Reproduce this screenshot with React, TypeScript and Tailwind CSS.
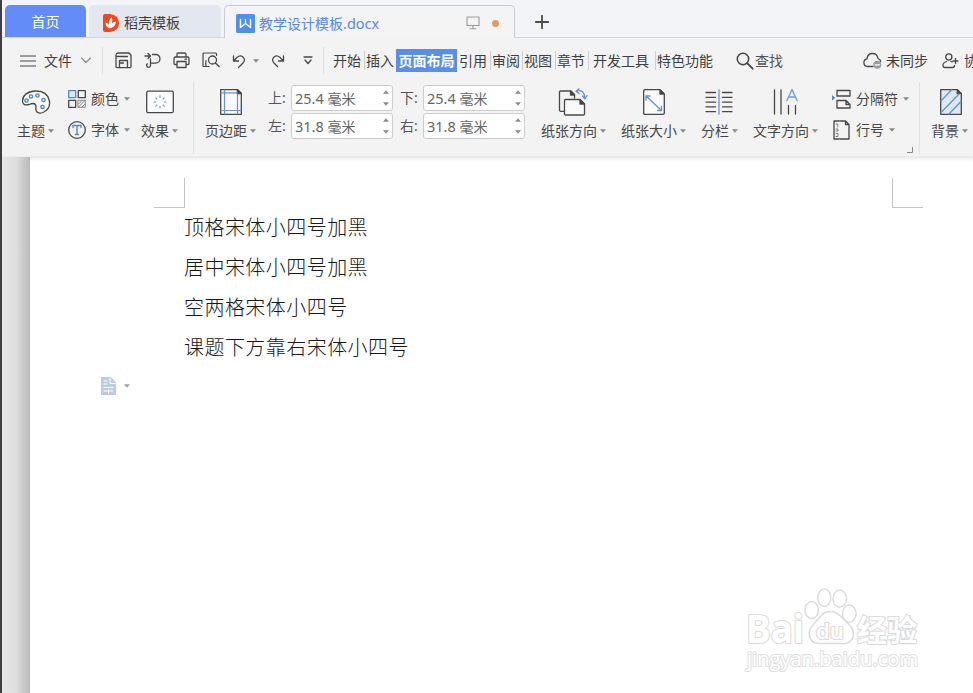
import type { ReactNode } from "react";

const documentLines = [
  "顶格宋体小四号加黑",
  "居中宋体小四号加黑",
  "空两格宋体小四号",
  "课题下方靠右宋体小四号",
];

function Caret({ className = "" }: { className?: string }) {
  return (
    <svg width="6" height="4" viewBox="0 0 6 4" className={`shrink-0 ${className}`}>
      <path d="M0 .3h6L3 3.7z" fill="#8a8a8a" />
    </svg>
  );
}

function Icon({ w, h, children, className = "" }: { w: number; h: number; children: ReactNode; className?: string }) {
  return (
    <svg
      width={w}
      height={h}
      viewBox={`0 0 ${w} ${h}`}
      fill="none"
      stroke="#484848"
      strokeWidth="1.3"
      strokeLinecap="round"
      strokeLinejoin="round"
      className={`block shrink-0 ${className}`}
    >
      {children}
    </svg>
  );
}

function Tabs() {
  return (
    <div className="flex h-[38px] shrink-0 items-end bg-[#f2f4f8] shadow-[inset_0_-1px_0_#d3d6da]">
      <div className="mb-px ml-[3px] flex h-8 w-[81px] items-center justify-center rounded-t-[5px] bg-[#648cf8] pt-0.5 text-white">
        首页
      </div>
      <div className="mb-px ml-[3px] flex h-8 w-[132px] items-center rounded-t-[5px] bg-[#e3e7ef] pt-1 pl-[14px]">
        <Icon w={16} h={18}>
          <path d="M0 2Q0 0 2 0h5q9 1 9 9t-9 9H2q-2 0-2-2z" fill="#ee4a22" stroke="none" />
          <path d="M7 14.500Q2.500 13 2.500 8.500q2.200.3 3.300 2.500Q5.500 6 8.500 3q1.500 3 .5 6.500 1.500-2 4-2Q12.500 13 7 14.500z" fill="#fff" stroke="none" />
        </Icon>
        <span className="ml-[5px]">稻壳模板</span>
      </div>
      <div className="ml-[3px] flex h-[33px] w-[291px] items-center rounded-t-[5px] border border-b-0 border-[#c5cad4] bg-[#f4f4f4] pt-0.5 pl-[11px]">
        <Icon w={19} h={19}>
          <rect width="19" height="19" rx="1.500" fill="#4f90ee" stroke="none" />
          <path d="M4.500 5.500v8l5-4 5 4v-8M9.500 5.500v4" stroke="#fff" strokeWidth="1.400" />
        </Icon>
        <span className="ml-[4px] w-[122px] whitespace-nowrap text-[#5688e8]">
          教学设计模板<span className="text-[14.500px]">.docx</span>
        </span>
        <Icon w={14} h={14} className="ml-[85px]">
          <path d="M1 1h12v8.500H1zM7 9.500v3M4 12.800h6" stroke="#999" strokeWidth="1.100" />
        </Icon>
        <span className="ml-[12px] size-[7px] rounded-full bg-[#e69a5b]" />
      </div>
      <Icon w={14} h={14} className="mb-[9px] ml-[20px]">
        <path d="M7 .8v12.400M.8 7h12.400" stroke="#4b4b4b" strokeWidth="1.800" />
      </Icon>
    </div>
  );
}

function Split() {
  return <span className="h-[19px] w-px bg-[#cfcfcf]" />;
}

function MenuBar() {
  return (
    <div className="flex h-[44px] shrink-0 items-center pt-px whitespace-nowrap *:shrink-0">
      <Icon w={16} h={14} className="ml-[18px]">
        <path d="M.5 2h15M.5 7h15M.5 12h15" strokeWidth="1.200" />
      </Icon>
      <span className="ml-[8px] w-[29px]">文件</span>
      <Icon w={10} h={7} className="ml-[8px]">
        <path d="M.5 1 5 5.500 9.500 1" stroke="#8b8b8b" strokeWidth="1.100" />
      </Icon>
      <span className="ml-[11px] h-[27px] w-px bg-[#dedede]" />

      <Icon w={17} h={17} className="ml-[12px]">
        <path d="M3.500 1H14l2 2v11.500q0 1.200-1.200 1.200H2.200Q1 15.700 1 14.500V3.500Q1 1 3.500 1zM1.500 4.500h11M4.500 15.500V8.500h8v7M4.500 11h4" />
      </Icon>
      <Icon w={17} h={17} className="ml-[12px]">
        <path d="M1 4h5M4 1.500 6.500 4 4 6.500M8.500 2.500h3.200a4.300 4.300 0 0 1 0 8.600H6.500V7M6.500 11.100v2.400q0 1.800-1.800 1.800t-2-1.700.7-1.700" />
      </Icon>
      <Icon w={17} h={17} className="ml-[12px]">
        <path d="M4 5V2.200Q4 1 5.200 1h6.600Q13 1 13 2.200V5M4 12.500H2.200Q1 12.500 1 11.300V6.500Q1 5 2.500 5h12Q16 5 16 6.500v4.800q0 1.200-1.200 1.200H13M4 9.500h9v6H4zM12 7.200h1.500" />
      </Icon>
      <Icon w={18} h={17} className="ml-[12px]">
        <path d="M7 14.500H2Q1 14.500 1 13.500V2q0-1 1-1h11.500q1 0 1 1v1.500M4 14.500q-.5-3 0-6" strokeWidth="1.200" />
        <circle cx="10.500" cy="8" r="4" />
        <path d="m13.400 11 3.800 3.500" />
      </Icon>
      <Icon w={14} h={16} className="ml-[12px]">
        <path d="M1.500 3v5h5M2 7.500 5.200 4.300Q8 1.700 10.700 3.700 14 6.500 11 10L6.500 14.500" />
      </Icon>
      <Caret className="ml-[7px]" />
      <Icon w={14} h={16} className="ml-[12px]">
        <path d="M12.500 3v5h-5M12 7.500 8.800 4.300Q6 1.700 3.300 3.700 0 6.500 3 10l3.500 3.500" />
      </Icon>
      <Icon w={10} h={9} className="ml-[18px]">
        <path d="M1 1h8M2 4l3 3.500L8 4" />
      </Icon>
      <span className="ml-[10px] h-[27px] w-px bg-[#dedede]" />

      <span className="ml-[9px] w-[31px]">开始</span>
      <Split />
      <span className="ml-px w-[30px]">插入</span>
      <span className="flex h-[23px] w-[61px] items-center justify-center bg-[#5c8ee8] font-bold text-white">页面布局</span>
      <span className="ml-[2px] w-[31px]">引用</span>
      <Split />
      <span className="ml-px w-[30px]">审阅</span>
      <Split />
      <span className="ml-px w-[31px]">视图</span>
      <Split />
      <span className="ml-px w-[31px]">章节</span>
      <Split />
      <span className="ml-[4px] w-[62px]">开发工具</span>
      <Split />
      <span className="ml-px w-[57px]">特色功能</span>
      <Icon w={18} h={18} className="ml-[22px]">
        <circle cx="7" cy="7" r="5.700" strokeWidth="1.600" />
        <path d="m11.200 11.200 5.500 5.500" strokeWidth="1.900" />
      </Icon>
      <span className="ml-px w-[29px] text-[#555]">查找</span>
      <Icon w={19} h={17} className="ml-[79px]">
        <path d="M10 14.500H4.500A3.900 3.900 0 0 1 4 6.800Q4.500 1.500 9.500 1.500q4.800 0 5.500 5 2.500.8 2.700 3" />
        <circle cx="14.300" cy="12.800" r="4" fill="#999ca3" stroke="none" />
        <path d="M12.200 12.800h4.200" stroke="#fff" />
      </Icon>
      <span className="ml-[4px] w-[43px]">未同步</span>
      <Icon w={17} h={16} className="ml-[13px]">
        <circle cx="6.800" cy="4" r="3.100" />
        <path d="M4.500 8.500Q1 9.500 1 12.500q0 2 2 2h7.500q2 0 2-2M9 8.500l1 .4M13.500 5.500v5M11 8h5" />
      </Icon>
      <span className="ml-[5px]">协作</span>
    </div>
  );
}

function BigButton({ label, icon, className = "" }: { label: string; icon: ReactNode; className?: string }) {
  return (
    <div className={`flex shrink-0 flex-col pt-[5px] ${className}`}>
      <div className="flex h-[30px] items-center justify-center pr-[3px]">{icon}</div>
      <div className="mt-[4px] flex h-5 items-center whitespace-nowrap">
        {label}
        <Caret className="ml-[3px]" />
      </div>
    </div>
  );
}

function SmallButton({ label, icon }: { label: string; icon: ReactNode }) {
  return (
    <div className="flex h-[20px] items-center whitespace-nowrap">
      {icon}
      <span className="ml-[5px]">{label}</span>
      <Caret className="ml-[5px]" />
    </div>
  );
}

function MarginField({ label, value }: { label: string; value: string }) {
  return (
    <div className="flex h-[26px] items-center">
      <span className="w-[23px] text-[#555]">{label}:</span>
      <div className="flex h-[26px] w-[102px] items-center rounded-[3px] border border-[#cdcdcd] bg-white pl-[3px] text-[#666]">
        <span className="w-[88px] whitespace-nowrap">
          <span className="text-[14.500px]">{value}</span> 毫米
        </span>
        <div className="flex flex-col gap-[8px]">
          <Caret className="rotate-180" />
          <Caret />
        </div>
      </div>
    </div>
  );
}

function Ribbon() {
  return (
    <div className="flex h-[75px] shrink-0 border-b border-[#ececec] text-[#484848]">
      <BigButton
        label="主题"
        className="ml-[15px] w-[41px]"
        icon={
          <Icon w={30} h={26}>
            <path d="M8 15.500Q1.500 17 1.500 12 2 3 14 2q12-.5 14.300 9.500Q30 20 22 23.500q-4.500 1.500-6.500-1-1-2-.5-4 .2-4-3-4-1.500 0-4 1z" fill="#fafafa" />
            <g stroke="#5586c5" fill="#dce9fb">
              <circle cx="5.500" cy="11.500" r="1.700" />
              <circle cx="10" cy="7.500" r="1.700" />
              <circle cx="16.500" cy="6.500" r="1.700" />
              <circle cx="22.500" cy="11" r="1.700" />
              <circle cx="21.500" cy="18" r="1.700" />
            </g>
          </Icon>
        }
      />
      <div className="ml-[10px] flex w-[73px] shrink-0 flex-col gap-[11px] pt-[7px]">
        <SmallButton
          label="颜色"
          icon={
            <Icon w={18} h={18}>
              <rect x=".7" y=".7" width="7" height="7" stroke="#5586c5" fill="#dce9fb" />
              <rect x="10.300" y=".7" width="7" height="7" />
              <rect x=".7" y="10.300" width="7" height="7" />
              <path d="M10.300 10.300h7v7h-7zM10.500 14l3.500-3.500M10.500 17l6.500-6.500M14 17l3-3" stroke="#888" strokeWidth="1" />
            </Icon>
          }
        />
        <SmallButton
          label="字体"
          icon={
            <Icon w={18} h={18}>
              <circle cx="9" cy="9" r="8.300" />
              <path d="M5 6.500V4.500h8v2M9 4.500v9M7.500 13.500h3" stroke="#5586c5" strokeWidth="1.400" />
            </Icon>
          }
        />
      </div>
      <BigButton
        label="效果"
        className="w-[41px]"
        icon={
          <Icon w={28} h={24}>
            <rect x=".7" y="1.200" width="26.600" height="21.500" rx="1.500" fill="#fafafa" />
            <path
              d="M14 5.800v1.500M14 16.500v1.500M8 12h1.500M18.500 12H20M9.800 7.800l1 1M18.200 7.800l-1 1M9.800 16.200l1-1M18.200 16.200l-1-1"
              stroke="#6793ce"
              strokeWidth="1.200"
            />
          </Icon>
        }
      />
      <span className="ml-[11px] h-[72px] w-px shrink-0 bg-[#e2e2e2]" />

      <BigButton
        label="页边距"
        className="ml-[11px] w-[55px]"
        icon={
          <Icon w={22} h={26}>
            <path d="M.7.700h17l3.600 3.600v21H.7z" fill="#fafafa" />
            <path d="M17.300.7v4h4z" fill="#444" />
            <path d="M4.500 1v24M17.500 5v20M1 3.800h16M1 21.500h20" stroke="#6793ce" strokeWidth="1.200" />
          </Icon>
        }
      />
      <div className="ml-[8px] grid shrink-0 grid-cols-[125px_125px] content-start gap-x-[7px] gap-y-[2px] pt-[3px]">
        <MarginField label="上" value="25.4" />
        <MarginField label="下" value="25.4" />
        <MarginField label="左" value="31.8" />
        <MarginField label="右" value="31.8" />
      </div>
      <BigButton
        label="纸张方向"
        className="ml-[16px] w-[66px]"
        icon={
          <Icon w={30} h={28}>
            <path d="M7 23.300H2.500Q1.500 23 1.500 22V4Q1.500 3 2.500 3H13l3.500 3.500V10" />
            <path d="M7.500 11.500H22l4.500 4.500v10q0 1-1 1h-18q-1 0-1-1V12.500q0-1 1-1z" fill="#fafafa" />
            <path d="M22 11.500v4.500h4.500zM12.500 3v4h4z" fill="#444" />
            <path d="M19 3q7-2 8 7M21 .8 18 3.200l3 2.400M24.500 8l2.500 3 2-3.500" stroke="#6793ce" />
          </Icon>
        }
      />
      <BigButton
        label="纸张大小"
        className="ml-[14px] w-[66px]"
        icon={
          <Icon w={22} h={26} className="ml-[2px]">
            <path d="M2 .7h15l4.300 4.300v19q0 1.300-1.300 1.300H2Q.7 25.300.7 24V2Q.7.700 2 .7z" fill="#fafafa" />
            <path d="M17 1v4h4z" fill="#444" />
            <path d="m3 7 15.500 14.500M3 11V7h4M14.500 21.500h4v-4" stroke="#6793ce" />
          </Icon>
        }
      />
      <BigButton
        label="分栏"
        className="ml-[14px] w-[38px]"
        icon={
          <Icon w={28} h={26}>
            <path d="M1 3.500h9.500M1 8.300h9.500M1 13.100h9.500M1 17.900h9.500M1 22.700h9.500M17.500 3.500H27M17.500 8.300H27M17.500 13.100H27M17.500 17.900H27M17.500 22.700H27" />
            <path d="M14 1v24" stroke="#6793ce" />
          </Icon>
        }
      />
      <BigButton
        label="文字方向"
        className="ml-[14px] w-[66px]"
        icon={
          <Icon w={26} h={26} className="ml-[3px]">
            <path d="M1.500 1v24M8 1v24M15.500 16.500V25M22.500 16.500V25" />
            <path d="m14 11.500 5-11 5 11M15.500 8h7" stroke="#6f9fdf" strokeWidth="1.400" />
          </Icon>
        }
      />
      <div className="ml-[13px] flex w-[76px] shrink-0 flex-col gap-[11px] pt-[7px]">
        <SmallButton
          label="分隔符"
          icon={
            <Icon w={19} h={20}>
              <path d="M5 1.500h13v5.500H5zM5 11.500h9l4 4V19H5zM14 11.500v4h4" />
              <path d="M0 6v5.500L3.300 8.700z" fill="#5586c5" stroke="none" />
            </Icon>
          }
        />
        <SmallButton
          label="行号"
          icon={
            <Icon w={19} h={20}>
              <path d="M8 1h5.500L17 4.500V19H8M13.500 1v3.500H17M7 1H2v18h5" />
              <path d="M4 4h1.800v3M4 9h2v2H4M4 13.500h2v3H4" stroke="#777" strokeWidth=".9" />
            </Icon>
          }
        />
      </div>
      <Icon w={6} h={6} className="mt-[65px] -ml-px">
        <path d="M5.500 0v5.500H0" stroke="#888" strokeWidth="1" strokeLinecap="square" />
      </Icon>
      <span className="ml-[6px] h-[72px] w-px shrink-0 bg-[#e2e2e2]" />
      <BigButton
        label="背景"
        className="ml-[11px] w-[42px]"
        icon={
          <Icon w={22} h={26}>
            <path d="M.7.700h16.600l4 4v20.600H.7z" fill="#dce9fb" />
            <path d="M17.300.7v4h4z" fill="#444" />
            <path d="M1 12 11.500 1M1 23.500 19 5M9 25 21 12.500" stroke="#6793ce" />
          </Icon>
        }
      />
    </div>
  );
}

function Watermark() {
  return (
    <svg
      width="184"
      height="96"
      viewBox="0 -4 184 96"
      className="absolute right-[46px] bottom-[11px]"
      fill="#fff"
      stroke="#dcdcdc"
      strokeWidth="1.500"
      strokeLinejoin="round"
      fontFamily="'Open Sans', 'Noto Sans CJK SC', sans-serif"
    >
      <ellipse cx="68.700" cy="20" rx="6.700" ry="8.600" />
      <ellipse cx="81.300" cy="7.700" rx="6.500" ry="8.800" />
      <ellipse cx="96.700" cy="8.700" rx="6.800" ry="8.600" />
      <ellipse cx="106.300" cy="23.700" rx="6.800" ry="8.600" />
      <path d="M87 21.500q-6 0-9.500 5l-8.500 9.500q-5 6-1.500 13 3 5 10 4.500h20q9 1 12-5 2.500-7-2-12.500L98 26.500q-5-5-11-5z" />
      <g style={{ paintOrder: "stroke" }} strokeWidth="2.200">
        <text x="3" y="53" fontSize="39" fontWeight="700" textLength="58" lengthAdjust="spacingAndGlyphs">Bai</text>
        <text x="73" y="49" fontSize="21" fontWeight="600" textLength="28" lengthAdjust="spacingAndGlyphs">du</text>
        <text x="114" y="51" fontSize="30" fontWeight="700" fontFamily="'Noto Sans CJK SC', sans-serif">经验</text>
        <text x="4" y="76" fontSize="20" fontWeight="400" stroke="#e2e2e2" textLength="171" lengthAdjust="spacingAndGlyphs">
          jingyan.baidu.com
        </text>
      </g>
    </svg>
  );
}

function Page() {
  return (
    <div className="relative flex min-h-0 flex-1">
      <div className="w-[28px] shrink-0 bg-linear-to-r from-[#e6e6e6] via-[#dedede] to-[#bababa]" />
      <div className="flex-1 bg-white shadow-[inset_0_4px_4px_-3px_#dddddd]">
        <div className="flex justify-between pt-[21px] pr-[50px] pl-[124px]">
          <span className="h-[30px] w-[31px] border-r border-b border-[#c4c4c4]" />
          <span className="h-[30px] w-[31px] border-b border-l border-[#c4c4c4]" />
        </div>
        <div className="pl-[154px] text-[20px] leading-[40px] font-light tracking-[0.45px] text-[#181818]">
          {documentLines.map((line) => (
            <p key={line}>{line}</p>
          ))}
        </div>
        <div className="mt-[9px] flex items-center pl-[71px]">
          <Icon w={15} h={18}>
            <path d="M0 0h10l5 5.500V18H0z" fill="#bdcce3" stroke="none" />
            <path d="M9 1v5.500h5M3 4h3M3 7h3M3 10.500h9M3 14h9M7.500 13v3" stroke="#fff" strokeWidth="1" />
          </Icon>
          <Caret className="ml-[8px] opacity-80" />
        </div>
      </div>
      <Watermark />
    </div>
  );
}

export default function App() {
  return (
    <div className="flex h-[693px] w-[973px] overflow-hidden bg-[#3f3f43] pl-[2px] font-['Noto_Sans','Noto_Sans_CJK_SC',sans-serif] text-[14px] leading-5 text-[#3f3f3f]">
      <div className="flex w-[971px] shrink-0 flex-col overflow-hidden bg-[#f3f3f3]">
        <Tabs />
        <MenuBar />
        <Ribbon />
        <Page />
      </div>
    </div>
  );
}
